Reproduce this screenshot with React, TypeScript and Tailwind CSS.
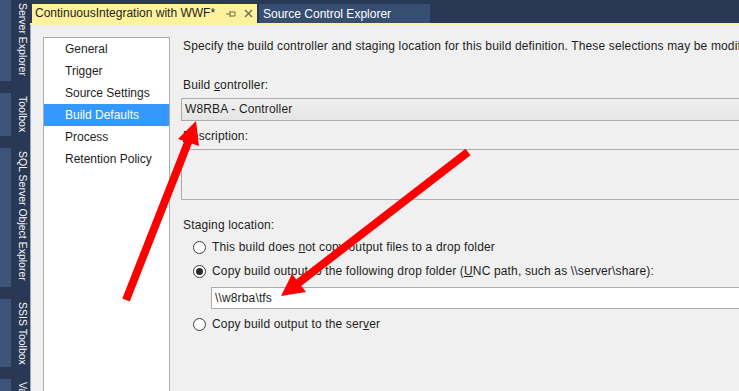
import React from "react"

const sideTabs = [
  { label: "Server Explorer", h: "h-[81px]" },
  { label: "Toolbox", h: "h-[43px]" },
  { label: "SQL Server Object Explorer", h: "h-[139px]" },
  { label: "SSIS Toolbox", h: "h-[68px]" },
  { label: "Variables", h: "h-[60px]" },
]

const navItems = ["General", "Trigger", "Source Settings", "Build Defaults", "Process", "Retention Policy"]

const Radio = ({ checked }: { checked?: boolean }) => (
  <span className="w-[13px] h-[13px] rounded-full border border-[#3c3c3c] bg-white flex items-center justify-center shrink-0">
    {checked && <span className="w-[7px] h-[7px] rounded-full bg-[#2a2a2a]" />}
  </span>
)

const Arrows = () => (
  <svg className="absolute inset-0 pointer-events-none" width={739} height={391} viewBox="0 0 739 391">
    {/* arrow to build controller */}
    <line x1={126} y1={300} x2={189} y2={140} stroke="#ff0000" strokeWidth={8} />
    <polygon points="196,121 178,139 199,146" fill="#ff0000" />
    {/* arrow to drop folder */}
    <line x1={468} y1={152} x2={297} y2={284} stroke="#ff0000" strokeWidth={8} />
    <polygon points="281,296 292,274 306,292" fill="#ff0000" />
  </svg>
)

export default function App() {
  return (
    <div className="relative w-[739px] h-[391px] overflow-hidden flex bg-[#293955] font-['Liberation_Sans',Arial,sans-serif] text-[12px] tracking-[0.15px] text-[#1e1e1e]">
      {/* auto-hide tool window strip */}
      <div className="w-[30px] shrink-0 flex flex-col gap-[12px] tracking-normal">
        {sideTabs.map((t) => (
          <div key={t.label} className={`${t.h} flex shrink-0`}>
            <div className="w-[11px] bg-[#3e5378]" />
            <div className="flex-1 pt-[3px] pl-[2px] text-[10.5px] text-[#f4f4f4] [writing-mode:vertical-rl] leading-[15px] whitespace-nowrap">
              {t.label}
            </div>
          </div>
        ))}
      </div>

      <div className="flex-1 flex flex-col min-w-0">
        {/* document tabs */}
        <div className="h-[23px] pt-[4px] pl-[2px] flex shrink-0 tracking-normal">
          <div className="h-full w-[225px] bg-[#fff29d] flex items-center pl-[3px] text-[#1e1e1e] leading-[19px]">
            <span className="whitespace-nowrap">ContinuousIntegration with WWF*</span>
            <svg className="ml-auto" width={12} height={10} viewBox="0 0 12 10">
              <path d="M1 5h4M5 2v6M5 3h5v4H5" stroke="#6d6a4f" strokeWidth={1} fill="none" />
            </svg>
            <svg className="ml-[7px] mr-[4px]" width={9} height={9} viewBox="0 0 9 9">
              <path d="M1 1l7 7M8 1L1 8" stroke="#6d6a4f" strokeWidth={1.4} />
            </svg>
          </div>
          <div className="h-full w-[171px] ml-[2px] bg-[#364e6f] text-white flex items-center pl-[4px] whitespace-nowrap">
            Source Control Explorer
          </div>
        </div>
        <div className="h-[2px] bg-[#fff29d] shrink-0" />

        {/* build definition editor */}
        <div className="flex-1 flex bg-[#f0f0f0] border-l border-[#9aa7bf] pl-[12px] pt-[12px] min-h-0">
          <div className="w-[127px] shrink-0 bg-white border border-[#abadb3] border-b-0 tracking-normal">
            {navItems.map((item) => (
              <div
                key={item}
                className={`h-[22px] leading-[22px] pl-[21px] whitespace-nowrap ${
                  item === "Build Defaults" ? "bg-[#3399ff] text-white" : ""
                }`}
              >
                {item}
              </div>
            ))}
          </div>

          <div className="flex-1 ml-[11px] flex flex-col min-w-0">
            <div className="h-[16px] leading-[16px] pl-[2px] mt-[1px] whitespace-nowrap">
              Specify the build controller and staging location for this build definition. These selections may be modified
            </div>
            <div className="h-[16px] leading-[16px] pl-[2px] mt-[23px]">
              Build <span className="underline">c</span>ontroller:
            </div>
            <div className="h-[23px] mt-[5px] -mr-[4px] border border-[#acacac] bg-gradient-to-b from-[#f0f0f0] to-[#e5e5e5] pl-[3px] leading-[21px]">
              W8RBA - Controller
            </div>
            <div className="h-[16px] leading-[16px] pl-[2px] mt-[7px]">
              <span className="underline">D</span>escription:
            </div>
            <div className="h-[51px] mt-[5px] -mr-[4px] border border-[#acacac] bg-[#f0f0f0]" />
            <div className="h-[16px] leading-[16px] pl-[2px] mt-[17px]">Staging location:</div>
            <div className="h-[16px] mt-[6px] ml-[12px] flex items-center gap-[6px] whitespace-nowrap">
              <Radio />
              <span>
                This build does <span className="underline">n</span>ot copy output files to a drop folder
              </span>
            </div>
            <div className="h-[16px] mt-[8px] ml-[12px] flex items-center gap-[6px] whitespace-nowrap">
              <Radio checked />
              <span>
                Copy build output to the following drop folder (<span className="underline">U</span>NC path, such as
                \\server\share):
              </span>
            </div>
            <div className="h-[22px] mt-[8px] ml-[30px] -mr-[4px] border border-[#acacac] bg-white pl-[3px] leading-[20px]">
              \\w8rba\tfs
            </div>
            <div className="h-[16px] mt-[7px] ml-[12px] flex items-center gap-[6px] whitespace-nowrap">
              <Radio />
              <span>
                Copy build output to the ser<span className="underline">v</span>er
              </span>
            </div>
          </div>
        </div>
      </div>

      <Arrows />
    </div>
  )
}
